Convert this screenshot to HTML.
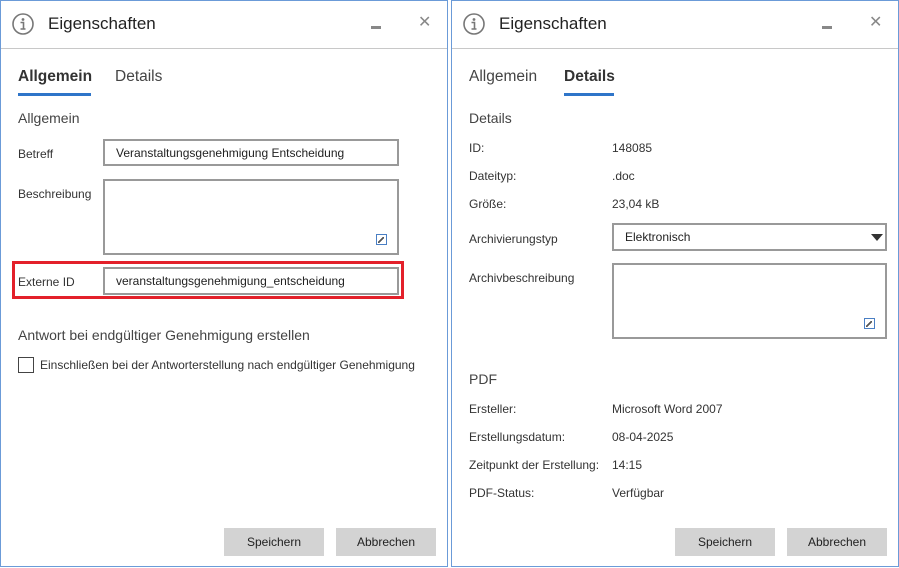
<!DOCTYPE html>
<html><head><meta charset="utf-8"><style>
*{margin:0;padding:0;box-sizing:border-box}
body{width:899px;height:568px;background:#fff;font-family:"Liberation Sans",sans-serif;color:#222;position:relative;overflow:hidden}
.win{position:absolute;top:0;height:567px;box-shadow:inset 0 0 0 1px #6b9bd8;background:#fff}
.a{position:absolute;white-space:nowrap}
.t{font-size:17px;color:#222}
.hl{position:absolute;left:1px;right:1px;top:48px;height:1px;background:#c8c8c8}
.tab{font-size:15.5px;color:#444}
.tab.b{font-weight:bold;color:#333}
.ul{position:absolute;height:3px;background:#2f75c9}
.s{font-size:12px;color:#333}
.sec{font-size:14px;color:#444}
.box{position:absolute;border:2px solid #999;background:#fff;font-size:12px;padding-left:11px;line-height:25px;color:#222}
.btn{position:absolute;background:#d3d3d3;font-size:12px;text-align:center;line-height:28px;width:100px;height:28px;color:#222}
.rs{position:absolute;width:11px;height:11px;border:1px solid #4a7fc4}
.rs:after{content:"";position:absolute;left:1px;top:2px;width:6px;height:6px;background:linear-gradient(135deg,transparent 40%,#555 40%,#555 60%,transparent 60%)}
</style></head><body>
<div class="win" style="left:0;width:448px">
 <svg class="a" style="left:12px;top:13px" width="22" height="22" viewBox="0 0 22 22"><circle cx="11" cy="11" r="10" fill="none" stroke="#777" stroke-width="1.6"/><circle cx="11" cy="6.5" r="1.4" fill="#777"/><path d="M8.5 9.5h3v6.5M8.5 16h5" stroke="#777" stroke-width="1.6" fill="none"/></svg>
 <div class="a t" style="left:48px;top:14px">Eigenschaften</div>
 <div class="a" style="left:371px;top:26px;width:10px;height:3px;background:#888"></div>
 <div class="a" style="left:418px;top:12px;font-size:16px;color:#888">✕</div>
 <div class="hl"></div>
 <div class="a tab b" style="left:18px;top:68px">Allgemein</div>
 <div class="ul" style="left:18px;top:93px;width:73px"></div>
 <div class="a tab" style="left:115px;top:68px">Details</div>
 <div class="a sec" style="left:18px;top:110px">Allgemein</div>
 <div class="a s" style="left:18px;top:147px">Betreff</div>
 <div class="box" style="left:103px;top:139px;width:296px;height:27px">Veranstaltungsgenehmigung Entscheidung</div>
 <div class="a s" style="left:18px;top:187px">Beschreibung</div>
 <div class="box" style="left:103px;top:179px;width:296px;height:76px"></div>
 <div class="rs" style="left:376px;top:234px"></div>
 <div class="a" style="left:12px;top:261px;width:392px;height:38px;border:3px solid #e3202a"></div>
 <div class="a s" style="left:18px;top:275px">Externe ID</div>
 <div class="box" style="left:103px;top:267px;width:296px;height:28px">veranstaltungsgenehmigung_entscheidung</div>
 <div class="a sec" style="left:18px;top:327px">Antwort bei endgültiger Genehmigung erstellen</div>
 <div class="a" style="left:18px;top:357px;width:16px;height:16px;border:1px solid #444"></div>
 <div class="a s" style="left:40px;top:358px">Einschließen bei der Antworterstellung nach endgültiger Genehmigung</div>
 <div class="btn" style="left:224px;top:528px">Speichern</div>
 <div class="btn" style="left:336px;top:528px">Abbrechen</div>
</div>
<div class="win" style="left:451px;width:448px">
 <svg class="a" style="left:12px;top:13px" width="22" height="22" viewBox="0 0 22 22"><circle cx="11" cy="11" r="10" fill="none" stroke="#777" stroke-width="1.6"/><circle cx="11" cy="6.5" r="1.4" fill="#777"/><path d="M8.5 9.5h3v6.5M8.5 16h5" stroke="#777" stroke-width="1.6" fill="none"/></svg>
 <div class="a t" style="left:48px;top:14px">Eigenschaften</div>
 <div class="a" style="left:371px;top:26px;width:10px;height:3px;background:#888"></div>
 <div class="a" style="left:418px;top:12px;font-size:16px;color:#888">✕</div>
 <div class="hl"></div>
 <div class="a tab" style="left:18px;top:68px">Allgemein</div>
 <div class="a tab b" style="left:113px;top:68px">Details</div>
 <div class="ul" style="left:113px;top:93px;width:50px"></div>
 <div class="a sec" style="left:18px;top:110px">Details</div>
 <div class="a s" style="left:18px;top:141px">ID:</div><div class="a s" style="left:161px;top:141px">148085</div>
 <div class="a s" style="left:18px;top:169px">Dateityp:</div><div class="a s" style="left:161px;top:169px">.doc</div>
 <div class="a s" style="left:18px;top:197px">Größe:</div><div class="a s" style="left:161px;top:197px">23,04 kB</div>
 <div class="a s" style="left:18px;top:232px">Archivierungstyp</div>
 <div class="box" style="left:161px;top:223px;width:275px;height:28px">Elektronisch</div>
 <div class="a" style="left:420px;top:234px;width:0;height:0;border-left:6px solid transparent;border-right:6px solid transparent;border-top:7px solid #333"></div>
 <div class="a s" style="left:18px;top:271px">Archivbeschreibung</div>
 <div class="box" style="left:161px;top:263px;width:275px;height:76px"></div>
 <div class="rs" style="left:413px;top:318px"></div>
 <div class="a sec" style="left:18px;top:371px">PDF</div>
 <div class="a s" style="left:18px;top:402px">Ersteller:</div><div class="a s" style="left:161px;top:402px">Microsoft Word 2007</div>
 <div class="a s" style="left:18px;top:430px">Erstellungsdatum:</div><div class="a s" style="left:161px;top:430px">08-04-2025</div>
 <div class="a s" style="left:18px;top:458px">Zeitpunkt der Erstellung:</div><div class="a s" style="left:161px;top:458px">14:15</div>
 <div class="a s" style="left:18px;top:486px">PDF-Status:</div><div class="a s" style="left:161px;top:486px">Verfügbar</div>
 <div class="btn" style="left:224px;top:528px">Speichern</div>
 <div class="btn" style="left:336px;top:528px">Abbrechen</div>
</div>
</body></html>
